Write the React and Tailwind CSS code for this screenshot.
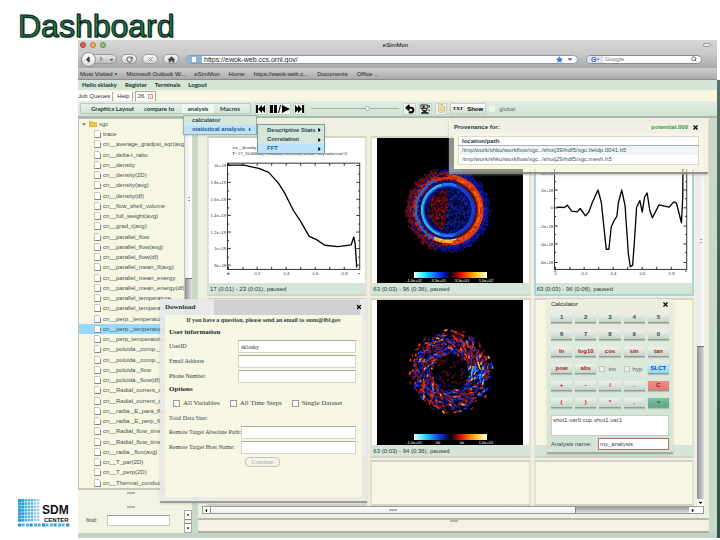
import {
  FaCaretDown,
  FaCaretLeft,
  FaCaretRight,
  FaCaretUp,
  FaHouse,
  FaStar,
} from "react-icons/fa6";
import { FileText, RotateCw, Search, Undo2, X } from "lucide-react";

const treeItems = [
  "trace",
  "cn__average_gradpsi_sqr(avg",
  "cn__delta-t_ratio",
  "cn__density",
  "cn__density(2D)",
  "cn__density(avg)",
  "cn__density(df)",
  "cn__flow_shell_volume",
  "cn__full_weight(avg)",
  "cn__grad_t(avg)",
  "cn__parallel_flow",
  "cn__parallel_flow(avg)",
  "cn__parallel_flow(df)",
  "cn__parallel_mean_fl(avg)",
  "cn__parallel_mean_energy",
  "cn__parallel_mean_energy(df)",
  "cn__parallel_temperature",
  "cn__parallel_temperature",
  "cn__perp._temperature",
  "cn__perp._temperature",
  "cn__perp_temperature",
  "cn__poloida._comp._c",
  "cn__poloida._comp._c",
  "cn__poloida._flow",
  "cn__poloida._flow(df)",
  "cn__Radial_current_d",
  "cn__Radial_current_d",
  "cn__radia._E_para_flu",
  "cn__radia._E_perp_flu",
  "cn__Radial_flow_time",
  "cn__Radial_flow_time",
  "cn__radia._flux(avg)",
  "cn__T_par(2D)",
  "cn__T_perp(2D)",
  "cn__Thermal_conduct",
];

const bookmarks = ["Microsoft Outlook W...", "eSimMon", "Home", "https://ewok-web.c...", "Documents", "Office .."];

// small seeded generator so the plots look the same on every render
function seeded(seed) {
  let s = seed;
  return () => {
    s = (s * 16807) % 2147483647;
    return s / 2147483647;
  };
}

function fluxColor(r, a, rnd) {
  const side = Math.cos(a);
  const n = rnd();
  if (r > 44) return null;
  if (r > 39) return n > (r - 38) / 7 ? (side > -0.3 ? "#0a1494" : "#6b1020") : null;
  if (r > 36) return side > 0 ? (n > 0.3 ? "#1220b8" : "#050a50") : n > 0.5 ? "#a8140c" : "#0c1670";
  if (r > 34) return side > 0.1 ? "#f0420e" : n > 0.4 ? "#d8260c" : "#300a28";
  if (r > 32) return side > 0.2 ? (n > 0.25 ? "#ff6a18" : "#b02a10") : side > -0.4 ? (a > 0 ? "#ffb030" : "#e83010") : "#2468e8";
  if (r > 30) return side > 0.3 ? "#e8380c" : a > 0 && side > -0.4 ? "#ffd850" : n > 0.5 ? "#c01c0c" : "#180828";
  if (r > 28.5) return side > 0.3 ? "#58120c" : "#0c1a80";
  if (r > 26) return side > 0.3 ? "#1838e0" : side > -0.3 ? "#2a78ff" : "#38b8f8";
  if (r > 24) return side > 0 ? "#1a50f0" : "#1c60e0";
  if (r > 21) return n > 0.35 ? "#0a1a90" : "#04083c";
  if (side < -0.15) return n > 0.4 ? (n > 0.75 ? "#9c1408" : "#5c0c08") : "#12042c";
  return n > 0.3 ? (n > 0.8 ? "#1a2cb0" : "#0a1468") : "#05062c";
}

function turbulentColor(r, a, rnd) {
  const n = rnd();
  const keep = r < 20 ? (r / 20) * 0.3 : r < 35 ? 0.85 : (44 - r) / 10;
  if (rnd() > keep) return null;
  if (Math.abs(a) < 0.35 && r > 17 && r < 35 && n > 0.4) {
    return n > 0.8 ? "#ffb040" : n > 0.6 ? "#30a8ff" : "#2058ff";
  }
  if (r < 20) return n > 0.5 ? "#560a0c" : "#0c0c50";
  if (n > 0.96) return "#ff9850";
  if (n > 0.92) return "#4c90f8";
  if (n > 0.76) return "#e0381c";
  if (n > 0.5) return "#8c1418";
  if (n > 0.28) return "#1c30d0";
  return "#0c1060";
}

function speckle(kind) {
  const rnd = seeded(kind === "flux" ? 4711 : 977);
  const rects = [];
  const cx = kind === "flux" ? 71 : 74;
  const step = kind === "flux" ? 1.2 : 1.6;
  for (let r = 1; r < 44; r += step) {
    const count = Math.max(6, Math.round((2 * Math.PI * r) / (kind === "flux" ? 1.8 : 2.6)));
    for (let i = 0; i < count; i++) {
      const a = (i / count) * 2 * Math.PI - Math.PI;
      const fill = kind === "flux" ? fluxColor(r, a, rnd) : turbulentColor(r, a, rnd);
      if (!fill) continue;
      const x = (cx + r * Math.cos(a)).toFixed(1);
      const y = (72 + r * Math.sin(a)).toFixed(1);
      const turn = ((a * 180) / Math.PI + (kind === "flux" ? 90 : 70 + rnd() * 70)).toFixed(0);
      rects.push({ x, y, turn, fill });
    }
  }
  return rects;
}

function ColorPlot({ kind, labels }) {
  const w = kind === "flux" ? 2.2 : 3.4;
  const h = kind === "flux" ? 1.4 : 1.6;
  return (
    <svg viewBox="0 0 146 145" className="block h-[145px] w-[146px] bg-black">
      <defs>
        <linearGradient id={`bar-${kind}`}>
          <stop offset="0" stopColor="#f4ffff" />
          <stop offset="0.14" stopColor="#20e8ff" />
          <stop offset="0.36" stopColor="#1030f0" />
          <stop offset="0.5" stopColor="#000010" />
          <stop offset="0.64" stopColor="#e01000" />
          <stop offset="0.84" stopColor="#ffc010" />
          <stop offset="1" stopColor="#ffffd8" />
        </linearGradient>
      </defs>
      {speckle(kind).map((p, i) => (
        <rect key={i} width={w} height={h} fill={p.fill} transform={`translate(${p.x} ${p.y}) rotate(${p.turn})`} />
      ))}
      <rect x="37" y="134" width="73" height="6" fill={`url(#bar-${kind})`} />
      <g fill="#fff" fontSize="4" fontFamily="Liberation Sans, sans-serif" textAnchor="middle">
        {labels.map((label, i) => (
          <text key={i} x={37 + i * 24} y="144">{label}</text>
        ))}
      </g>
    </svg>
  );
}

function LinePlot({ points, yLabels, title, top }) {
  return (
    <svg viewBox="0 0 474 438" preserveAspectRatio="none" className="block h-[145px] w-full shrink-0 bg-white">
      <g fill="none" stroke="#333" strokeWidth="3">
        <rect x="56" y={top} width="401" height={397 - top} />
        {yLabels.map(([y]) => (
          <path key={y} d={`M56 ${y}h10M447 ${y}h10M56 ${y + 26}h5M452 ${y + 26}h5`} />
        ))}
        {[59, 103, 146, 190, 234, 278, 322, 366, 410].map((x) => (
          <path key={x} d={`M${x} 397v-8M${x} ${top}v8`} />
        ))}
      </g>
      <polyline points={points} fill="none" stroke="#000" strokeWidth="4" strokeLinejoin="round" />
      <g fill="#333" fontSize="13" fontFamily="Liberation Sans, sans-serif">
        {yLabels.map(([y, label]) => (
          <text key={y} x="52" y={y + 5} textAnchor="end">{label}</text>
        ))}
        {["0", "0.2", "0.4", "0.6", "0.8"].map((label, i) => (
          <text key={label} x={59 + i * 88} y="413" textAnchor="middle">{label}</text>
        ))}
      </g>
      {title && (
        <g fill="#222" fontSize="15" fontFamily="Liberation Serif, serif">
          <text x="72" y="32">cn__density</text>
          <text x="70" y="50">T=17, [0.00000, 1.00000] vs. [0.00, 2.00e+19] units/cm^3</text>
        </g>
      )}
    </svg>
  );
}

function Cell({ caption, active, children }) {
  return (
    <section
      className={`flex min-w-0 flex-col border-2 ${
        active ? "border-[#a9d3df]" : "border-[#d4d4c4] border-x-[#e2e2d2]"
      } bg-[#f7f6e2]`}
    >
      {children}
      {caption && <p className="h-[11px] bg-[#d5e6d9] px-px text-[6px] leading-3 text-[#1d3a36]">{caption}</p>}
    </section>
  );
}

function BrowserChrome() {
  const pill = "flex h-[10px] w-4 items-center justify-center rounded-full border border-[#9a9a9a] bg-gradient-to-b from-[#fafafa] to-[#d4d4d4] text-[#444]";
  return (
    <header>
      <div className="bg-gradient-to-b from-[#d6d6d6] via-[#c8c8c8] to-[#a9a9a9]">
        <div className="flex h-[10px] items-center px-0.5">
          <div className="flex flex-1 gap-1">
            <span className="size-[6px] rounded-full border border-[#a04440] bg-[#e0605a]"></span>
            <span className="size-[6px] rounded-full border border-[#b07a38] bg-[#f0b060]"></span>
            <span className="size-[6px] rounded-full border border-[#5c8c40] bg-[#94c870]"></span>
          </div>
          <h1 className="text-[6px] leading-[10px] text-black">eSimMon</h1>
          <div className="flex flex-1 justify-end pr-1">
            <span className="h-1 w-2 rounded-full border border-[#999] bg-[#eee]"></span>
          </div>
        </div>
        <div className="flex h-[18px] items-center gap-1 px-[3px]">
          <div className="flex items-center">
            <button aria-label="Back" className="z-10 flex size-[15px] items-center justify-center rounded-full border border-[#8c8c8c] bg-gradient-to-b from-white to-[#dcdcdc] text-[#333]">
              <FaCaretLeft size={9} />
            </button>
            <button aria-label="Forward" className="-ml-1 flex h-[10px] w-[25px] items-center justify-end gap-1 rounded-r-full border border-[#9a9a9a] bg-gradient-to-b from-[#e8e8e8] to-[#bdbdbd] pr-0.5 text-[#999]">
              <FaCaretRight size={8} />
              <FaCaretDown size={5} className="text-[#555]" />
            </button>
          </div>
          <button aria-label="Reload" className={pill}><RotateCw size={7} strokeWidth={3} /></button>
          <button aria-label="Stop" className={`${pill} ml-px text-[#888]`}><X size={7} strokeWidth={3} /></button>
          <button aria-label="Home page" className={`${pill} ml-px`}><FaHouse size={7} /></button>
          <div className="ml-0.5 flex h-[9px] flex-1 items-center rounded-full border border-[#8a9aa8] bg-white">
            <span className="flex h-[7px] w-4 items-center justify-center rounded-l-full bg-[#8fb2d6]">
              <span className="h-[5px] w-1 bg-white"></span>
            </span>
            <input aria-label="Address" defaultValue="https://ewok-web.ccs.ornl.gov/" className="h-[7px] min-w-0 flex-1 rounded-full bg-white px-0.5 text-[7px] leading-[7px] text-[#222] outline-none" />
            <FaStar size={7} className="text-[#4d7fd0]" />
            <FaCaretDown size={6} className="mx-1 text-[#557]" />
          </div>
          <label className="mr-3 ml-1 flex h-[9px] w-[116px] items-center rounded-full border border-[#8a8a8a] bg-white pr-1">
            <span className="flex h-[7px] w-4 items-center rounded-l-full bg-[#dce4f4] pl-1 text-[7px] leading-[7px] font-bold text-[#3e62b8]">
              G<FaCaretDown size={4} className="text-[#c04040]" />
            </span>
            <input aria-label="Search" placeholder="Google" className="h-[7px] min-w-0 flex-1 px-0.5 text-[6px] leading-[7px] outline-none placeholder:text-[#777]" />
            <Search size={6} strokeWidth={3} className="text-[#555]" />
          </label>
        </div>
      </div>
      <nav className="flex h-3 items-center gap-[9px] border-b border-[#8d8d8d] bg-gradient-to-b from-[#cdcdcd] to-[#ababab] px-0.5 text-[6px] leading-3 text-[#222]">
        <a href="#visited" className="flex items-center gap-px whitespace-nowrap">Most Visited <FaCaretDown size={4} /></a>
        {bookmarks.map((b) => (
          <a key={b} href="#bookmark" className="whitespace-nowrap">{b}</a>
        ))}
      </nav>
    </header>
  );
}

function MenuBar() {
  return (
    <>
      <nav className="flex h-[10px] items-center gap-2 bg-[#d3e6d8] px-1 font-[Lato,sans-serif] text-[6px] leading-[10px] font-bold text-[#1a2f2a]">
        <a href="#user">Hello sklasky</a>
        <a href="#register">Register</a>
        <a href="#terminals">Terminals</a>
        <a href="#logout">Logout</a>
      </nav>
      <div className="flex h-[11px] items-end gap-0.5 bg-[#f8f5e0] text-[6px] leading-[9px] text-[#333]">
        <button className="h-[9px] border-r border-[#aaa] bg-white pr-0.5">Job Queues</button>
        <button className="h-[9px] border-r border-[#aaa] bg-white px-0.5">Help</button>
        <button className="flex h-[10px] w-[21px] items-center justify-between border border-b-0 border-[#aaa] bg-white px-0.5">
          26 <X size={5} className="border border-[#d99] text-[#b33]" />
        </button>
      </div>
    </>
  );
}

function Toolbar() {
  const iconBtn = "flex h-[12px] items-center justify-center border border-[#c4d2c6] bg-[#eef4ee] text-black";
  return (
    <div className="flex h-[17px] items-center border-b-2 border-[#a9b8ab] bg-gradient-to-b from-[#e2ede3] to-[#cfe3d4] pl-0.5 text-[6px] leading-3 text-[#1c3a38]">
      <div className="flex h-[11px] items-center border border-[#b9c9bc] bg-gradient-to-b from-[#e8f1ea] to-[#d3e5d8] px-2 font-[Lato,sans-serif] font-bold">
        <button className="w-[47px] whitespace-nowrap">Graphics Layout</button>
        <button className="ml-1 w-[38px] whitespace-nowrap">compare to</button>
        <button className="ml-1 h-[9px] w-8 bg-[#f2f8f2] leading-[9px]">analysis</button>
        <button className="ml-1 w-6">Macros</button>
      </div>
      <div className="ml-1 flex items-center gap-0.5">
        <button aria-label="Previous" className={`${iconBtn} w-3`}>
          <svg viewBox="0 0 10 8" className="h-2 w-[10px]"><path d="M0 0h2v8H0zM2 4l4-4v8zM5 4l4-4v8z" /></svg>
        </button>
        <button aria-label="Pause or play" className={`${iconBtn} w-[22px]`}>
          <svg viewBox="0 0 20 8" className="h-2 w-5"><path d="M0 0h3v8H0zM4 0h3v8H4zM10 0h1L9 8H8zM12 0l8 4-8 4z" /></svg>
        </button>
        <button aria-label="Next" className={`${iconBtn} w-3`}>
          <svg viewBox="0 0 10 8" className="h-2 w-[10px]"><path d="M1 0l4 4-4 4zM4 0l4 4-4 4zM8 0h2v8H8z" /></svg>
        </button>
      </div>
      <input
        type="range"
        aria-label="Time step"
        defaultValue={65}
        className="mr-1 ml-[6px] h-[6px] w-[88px] appearance-none bg-[linear-gradient(#a3b0a6,#a3b0a6)] bg-[length:100%_1px] bg-center bg-no-repeat [&::-webkit-slider-thumb]:size-[5px] [&::-webkit-slider-thumb]:appearance-none [&::-webkit-slider-thumb]:rounded-full [&::-webkit-slider-thumb]:border [&::-webkit-slider-thumb]:border-[#a0aaa2] [&::-webkit-slider-thumb]:bg-white"
      />
      <div className="flex items-center gap-[3px]">
        <button aria-label="Undo" className={`${iconBtn} w-[13px]`}><Undo2 size={10} strokeWidth={5} /></button>
        <button aria-label="Film" className={`${iconBtn} w-[13px]`}>
          <svg viewBox="0 0 12 11" className="h-[10px] w-[11px]" fill="none" stroke="#222">
            <rect x="1" y="1" width="7" height="4" fill="#ddd" />
            <path d="M2 6l6 4M8 6l-6 4M1 10h9M10 1v3M10 6v2" strokeWidth="1.5" />
            <circle cx="4" cy="3" r="1" fill="#222" />
          </svg>
        </button>
        <button aria-label="Note" className={`${iconBtn} w-3`}>
          <FileText size={9} className="fill-[#faf4d8] text-[#c9a84c]" />
        </button>
        <div className={`${iconBtn} w-9 gap-1 bg-gradient-to-b from-white to-[#d0ddd2] px-0.5 font-bold`}>
          <span className="font-[Liberation_Serif,serif] text-[5px]">TXT</span>
          <button>Show</button>
        </div>
        <label className="flex items-center gap-1 text-[#55706a]">
          <input type="checkbox" className="size-[6px] appearance-none bg-[#eef4ee]" /> global
        </label>
      </div>
    </div>
  );
}

function Grip() {
  return <span className="mx-auto block h-0.5 w-2 border-y border-[#b5b5a8]"></span>;
}

function Sidebar() {
  return (
    <aside className="flex w-[114px] shrink-0 flex-col bg-[#f4f4e4]">
      <div className="flex min-h-0 flex-1 border-t border-[#b8c4b8]">
        <div className="flex min-w-0 flex-1 flex-col border border-t-0 border-[#c4c4b4] bg-[#f6f6e2] text-[6px] leading-[10px] text-[#3c5454]">
          <p className="flex h-[10px] items-center gap-0.5 pl-0.5">
            <FaCaretDown size={6} className="text-[#888]" />
            <svg viewBox="0 0 9 7" className="h-[6px] w-2"><path d="M0 1h4l1 1h4v5H0z" fill="#f2c84a" stroke="#b98f20" strokeWidth=".7" /></svg>
            xgc
          </p>
          <ul className="flex flex-1 flex-col">
            {treeItems.map((item, i) => (
              <li key={i} className={`flex min-h-0 flex-1 items-center gap-0.5 overflow-hidden pl-[15px] whitespace-nowrap ${i === 19 ? "bg-[#9bd8fb]" : ""}`}>
                <svg viewBox="0 0 7 8" className="h-2 w-[7px] shrink-0">
                  <path d="M.5.5h4l2 2v5h-6z" fill="#fff" stroke="#aaa" strokeWidth=".7" />
                  <path d="M.5 7.5h6V3" fill="none" stroke="#777" strokeWidth=".8" />
                </svg>
                {item}
              </li>
            ))}
          </ul>
        </div>
        <div className="w-[7px] bg-gradient-to-r from-[#8d8d92] to-[#e4e4e6]">
          <div className="flex h-[160px] flex-col justify-center border-b border-[#777] bg-gradient-to-r from-[#ececec] to-white">
            <span className="mx-auto h-1 w-0.5 border-y border-[#999]"></span>
          </div>
        </div>
      </div>
      <div className="flex h-[44px] border-t border-[#c8c8b8]">
        <div className="flex flex-1 flex-col pt-0.5">
          <Grip />
          <div className="h-3"></div>
          <Grip />
          <label className="flex flex-1 items-center gap-[10px] pl-2 text-[6px] text-[#333]">
            find:
            <input className="h-[11px] w-[63px] border border-[#c8c8c0] border-t-[#999] bg-white px-0.5 outline-none" />
          </label>
        </div>
        <div className="mt-5 flex w-2 flex-col border border-[#aaa] bg-white">
          <button aria-label="Scroll up" className="flex h-2 items-center justify-center"><FaCaretUp size={4} /></button>
          <span className="h-[6px] border-y border-[#888] bg-[#eee]"></span>
          <button aria-label="Scroll down" className="flex h-2 items-center justify-center"><FaCaretDown size={4} /></button>
        </div>
      </div>
    </aside>
  );
}

function PlotGrid() {
  return (
    <main className="flex min-w-0 flex-1 flex-col bg-[#f0f0e2]">
      <div className="h-[18px] bg-[#efefe4]"></div>
      <div className="flex pr-[5px] pl-[9px]">
        <div className="grid min-w-0 flex-1 grid-cols-3 grid-rows-[160px_160px_46px] gap-x-[3px] gap-y-0.5">
          <Cell caption="17 (0:01) - 23 (0:01), paused">
            <LinePlot
              title
              top={76}
              points="56,82 106,82 151,92 181,104 211,137 231,169 256,219 276,249 304,297 326,307 351,324 391,328 431,323 439,299 443,319 448,391"
              yLabels={[[83, "2e+19"], [134, "1.8e+19"], [185, "1.6e+19"], [234, "1.4e+19"], [284, "1.2e+19"], [334, "1e+19"], [384, "8e+18"]]}
            />
          </Cell>
          <Cell caption="63 (0:03) - 96 (0:36), paused">
            <div className="flex justify-center bg-white"><ColorPlot kind="flux" labels={["-1.0e+02", "-3.3e+01", "3.3e+01", "1.0e+02"]} /></div>
          </Cell>
          <Cell active caption="63 (0:03) - 96 (0:06), paused">
            <LinePlot
              top={10}
              points="63,209 86,210 95,203 108,221 125,223 134,213 150,235 160,224 171,194 188,157 198,194 208,289 213,336 221,336 228,269 238,247 245,237 250,194 260,157 270,204 280,349 286,389 293,384 298,319 305,209 315,189 322,224 329,179 337,166 345,219 353,241 373,202 403,209 418,193 426,197 441,256 445,179 446,20 455,20"
              yLabels={[[106, "4e+18"], [157, "2e+18"], [211, "0"], [266, "-2e+18"], [320, "-4e+18"], [376, "-6e+18"]]}
            />
          </Cell>
          <Cell>
            <div className="flex flex-1 justify-center bg-white"><div className="w-[146px] bg-black"></div></div>
          </Cell>
          <Cell caption="63 (0:03) - 94 (0:36), paused">
            <div className="flex justify-center bg-white"><ColorPlot kind="turbulent" labels={["-1.0e+01", "00", "0e", "1.0e+01"]} /></div>
          </Cell>
          <Cell caption=" ">
            <div className="h-[145px]"></div>
          </Cell>
          <Cell />
          <Cell />
          <Cell />
        </div>
        <div className="ml-[3px] flex w-[7px] flex-col bg-gradient-to-r from-[#8f9094] to-[#dcdce0]">
          <div className="flex h-[211px] flex-col justify-center border-b border-[#777] bg-gradient-to-r from-[#e8e8ea] to-[#f8f8f8]">
            <span className="mx-auto h-1 w-0.5 border-y border-[#999]"></span>
          </div>
          <button aria-label="Scroll plots down" className="mt-auto flex h-[7px] items-center justify-center bg-white text-black"><FaCaretDown size={5} /></button>
        </div>
      </div>
      <div className="mr-[5px] ml-1 flex h-2 border border-[#9a9a94] bg-[#a8a8a8]">
        <button aria-label="Scroll left" className="flex w-2 items-center justify-center border-r border-[#888] bg-white"><FaCaretLeft size={5} /></button>
        <div className="flex w-[73%] items-center border-r border-[#888] bg-gradient-to-b from-white to-[#ececec]"><Grip /></div>
        <div className="flex-1 bg-gradient-to-b from-[#9a9a9a] to-[#dedede]"></div>
        <button aria-label="Scroll right" className="flex w-[7px] items-center justify-center bg-white"><FaCaretRight size={5} /></button>
        <span className="w-[7px] bg-white"></span>
      </div>
      <div className="mt-1 flex-1 border-t-2 border-b-2 border-[#b9bbaa] border-b-[#a5b5a2] bg-[#f2f1e3]"><Grip /></div>
    </main>
  );
}

function AnalysisMenu() {
  const item = "flex w-full items-center justify-between whitespace-nowrap text-left";
  return (
    <div className="absolute top-[75px] left-[105px] z-20 flex items-start text-[6px] font-bold text-[#1c4450]">
      <div className="w-[74px] border border-[#9bb0a6] bg-[#d5e7da] shadow">
        <button className={`${item} h-[9px] pr-1 pl-2`}>calculator</button>
        <button className={`${item} h-[9px] bg-[#bce3fb] pr-1 pl-2 text-[#235a86]`}>
          statistical analysis <FaCaretRight size={5} />
        </button>
      </div>
      <div className="mt-[9px] w-[68px] border border-[#7e9a98] bg-[#d5e7da] shadow">
        <button className={`${item} h-[10px] pr-0.5 pl-[9px]`}>Descriptive Stats <FaCaretRight size={6} className="text-black" /></button>
        <button className={`${item} h-[9px] pr-0.5 pl-[9px]`}>Correlation <FaCaretRight size={6} className="text-black" /></button>
        <button className={`${item} h-[9px] bg-[#bce3fb] pr-0.5 pl-[9px] text-[#235a86]`}>FFT <FaCaretRight size={6} className="text-black" /></button>
      </div>
    </div>
  );
}

function Provenance() {
  return (
    <section className="absolute top-[81px] right-[9px] z-10 w-[259px] border-b-2 border-[#7c7c74]/80 bg-[#f1f1e6]/60 px-[5px] pb-[3px] text-[6px] shadow-[0_1px_2px_#8888]">
      <div className="flex h-3 items-center bg-[#f0f0e6] font-bold">
        <h2 className="flex-1 text-[#1c3a44]">Provenance for:</h2>
        <span className="text-[#3b9a38]">potential.000</span>
        <button aria-label="Close provenance" className="mx-1 text-black"><X size={7} strokeWidth={4} /></button>
      </div>
      <div className="bg-[#f7f6e4] px-1 pt-[3px] pb-1">
        <table className="w-full border border-[#ddd8c8] bg-white text-left text-[#3c5a66]">
          <thead>
            <tr className="h-2 border-b border-[#aab4b8] text-[#1c3a44]"><th className="px-[3px] leading-2 font-bold">location/path</th></tr>
          </thead>
          <tbody>
            <tr className="h-[9px] bg-[#f1f5f7]"><td className="px-[3px] leading-2">/tmp/work/shku/workflow/xgc../shotj39/hdf5/xgc.fieldp.0041.h5</td></tr>
            <tr className="h-[10px]"><td className="px-[3px] leading-2">/tmp/work/shku/workflow/xgc../shotj29/hdf5/xgc.mesh.h5</td></tr>
          </tbody>
        </table>
      </div>
    </section>
  );
}

function DownloadDialog() {
  const row = "flex h-[15px] items-center justify-between pr-[6px] whitespace-nowrap";
  const field = "h-[13px] shrink-0 border border-[#d4d4c8] border-t-[#a9a9a0] bg-white px-0.5 text-[6px] outline-none";
  return (
    <section className="absolute top-[259px] left-[82px] z-10 w-[207px] border-b-2 border-[#9c9c94] bg-[#e8e8e8]/90 px-[5px] pb-1 font-[Liberation_Serif,serif] text-[6px] text-[#2f4244] shadow">
      <div className="flex h-4 items-center justify-between">
        <h2 className="text-[7px] font-bold text-[#1d3540]">Download</h2>
        <button aria-label="Close download" className="text-black"><X size={6} strokeWidth={5} /></button>
      </div>
      <form className="h-[182px] bg-[#f7f7e3] pl-1">
        <p className="h-[10px] pr-1 text-center text-[6px] leading-[10px] font-bold">If you have a question, please send an email to smm@lbl.gov</p>
        <h3 className="h-[14px] text-[7px] leading-[14px] font-bold text-[#152c2c]">User information</h3>
        <label className={row}>UserID <input defaultValue="sklasky" className={`${field} w-[118px]`} /></label>
        <label className={row}>Email Address <input className={`${field} w-[118px]`} /></label>
        <label className={row}>Phone Number <input className={`${field} w-[118px]`} /></label>
        <h3 className="h-[11px] text-[7px] leading-[11px] font-bold text-[#152c2c]">Options</h3>
        <div className="flex h-4 items-center gap-[10px] pl-1 text-[7px]">
          {["All Variables", "All Time Steps", "Single Dataset"].map((o) => (
            <label key={o} className="flex items-center gap-[3px] whitespace-nowrap">
              <input type="checkbox" className="size-[7px] appearance-none border border-[#999] bg-[#fbfbf4]" />
              {o}
            </label>
          ))}
        </div>
        <p className="h-[14px] leading-[14px]">Total Data Size:</p>
        <label className={row}>Remote Target Absolute Path: <input className={`${field} w-[115px]`} /></label>
        <label className={row}>Remote Target Host Name: <input className={`${field} w-[115px]`} /></label>
        <button type="button" className="mt-0.5 ml-[76px] block h-[10px] w-[35px] rounded-sm border border-[#c4c4b8] bg-[#f4f4ea] text-[6px] leading-2 text-[#aaa]">Continue</button>
      </form>
    </section>
  );
}

function Calculator() {
  const base = "h-[10px] border-b border-[#8f9c92] bg-gradient-to-b shadow-[0_1px_1px_#9998] leading-[9px]";
  const plain = "from-[#eef2ec] to-[#c6d4c9]";
  const keys = (list, tone) => list.map((k) => <button key={k} className={`${base} ${plain} ${tone}`}>{k}</button>);
  return (
    <section className="absolute top-[259px] right-[44px] z-10 w-[126px] border-b-2 border-[#a0aaa0] bg-gradient-to-b from-[#eeeee0] via-[#d9e8dc] to-[#d3e4d6] px-[4px] pb-0.5 text-[6px] shadow">
      <div className="flex h-[10px] items-center justify-between text-[#222]">
        <h2>Calculator</h2>
        <button aria-label="Close calculator" className="text-black"><X size={7} strokeWidth={4} /></button>
      </div>
      <div className="mt-1 grid grid-cols-5 gap-x-[3px] gap-y-[7px] font-bold">
        {keys(["1", "2", "3", "4", "5", "6", "7", "8", "9", "0"], "text-[#2c4c48]")}
        {keys(["ln", "log10", "cos", "sin", "tan", "pow", "abs"], "text-[#a01c1c]")}
        {["inv", "hyp"].map((k) => (
          <label key={k} className="flex items-center gap-[3px] font-normal text-[#557]">
            <input type="checkbox" className="size-[6px] appearance-none border border-[#bcc8be] bg-[#eef2ea]" /> {k}
          </label>
        ))}
        <button className={`${base} from-[#c0f0ff] to-[#8fd8f4] text-[#1438b0]`}>SLCT</button>
        {keys(["+", "-", "/", "."], "text-[#d02020]")}
        <button className={`${base} from-[#f08c84] to-[#e87870] text-[#8c1010]`}>C</button>
        {keys(["(", ")", "*", ","], "text-[#d02020]")}
        <button className={`${base} from-[#7cc0a0] to-[#5fa888] text-[#0c5030]`}>=</button>
      </div>
      <textarea aria-label="Expression" defaultValue="shot1.var0 cup shot1.var1" className="mt-[7px] block h-[21px] w-full resize-none border border-[#c8d0c8] bg-white px-px text-[6px] leading-2 text-[#444] outline-none" />
      <label className="mt-0.5 flex items-center justify-between text-[#345]">
        Analysis name:
        <input defaultValue="my_analysis" className="h-3 w-[71px] border border-[#b87068] bg-white px-px outline-none" />
      </label>
    </section>
  );
}

function Logo() {
  const cols = [0, 1, 2, 3, 4, 5, 6];
  return (
    <svg viewBox="0 0 52 28" className="h-7 w-[52px]" role="img" aria-label="SDM Center">
      {cols.map((r) =>
        cols.map((c) => (
          <rect
            key={`${r}-${c}`}
            x={c * 3.2}
            y={r * 3.3}
            width={3 - c * 0.15}
            height={3 - c * 0.15}
            fill={c < 2 ? "#2f9fce" : c < 5 ? "#4db4dc" : "#7fcbe8"}
          />
        ))
      )}
      <rect x="22" y="6" width="30" height="17" fill="#fff" />
      <g fontFamily="Liberation Sans, sans-serif" fontWeight="bold" fill="#111">
        <text x="24" y="15" fontSize="12">SDM</text>
        <text x="26" y="23" fontSize="6">CENTER</text>
      </g>
      {[0, 1, 2, 3, 4, 5, 6, 7, 8, 9, 10, 11, 12].map((i) => (
        <rect key={i} x={i * 4} y="24.5" width={i % 2 ? 2.6 : 3.4} height="3" fill={i % 3 ? "#4db4dc" : "#2f8fc0"} />
      ))}
    </svg>
  );
}

export default function App() {
  return (
    <div className="flex min-h-screen flex-col bg-white font-[Liberation_Sans,Arial,sans-serif]">
      <h1 className="h-10 pt-[10px] pl-[18px] text-[32px] leading-8 text-[#1f7a56] [-webkit-text-stroke:1px_#031a10] [text-shadow:1px_1px_1px_#888]">
        Dashboard
      </h1>
      <div className="flex">
        <div className="flex w-[78px] shrink-0 flex-col justify-end pb-[11px] pl-[18px]"><Logo /></div>
        <div className="relative min-w-0 flex-1">
          <BrowserChrome />
          <MenuBar />
          <Toolbar />
          <div className="flex h-[420px] gap-[6px] border-b-[5px] border-[#c3d3c3] bg-[#c9dacb] pr-2">
            <Sidebar />
            <PlotGrid />
          </div>
          <AnalysisMenu />
          <Provenance />
          <DownloadDialog />
          <Calculator />
        </div>
        <div className="mt-10 w-[3px] bg-gradient-to-b from-[#5c7068] via-[#3e5c50] to-[#2c5448]"></div>
      </div>
    </div>
  );
}
